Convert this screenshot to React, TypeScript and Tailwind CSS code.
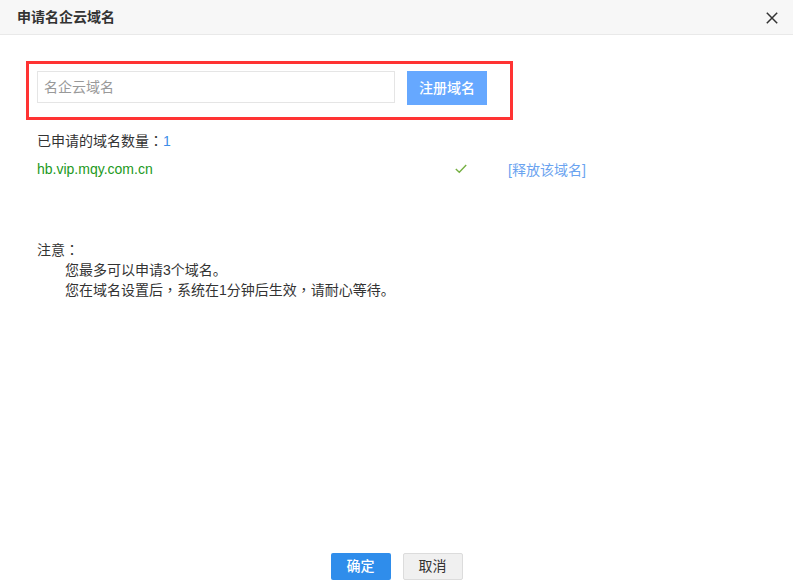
import React from "react";

const font = { fontFamily: '"Liberation Sans", Arial, "Noto Sans CJK SC", sans-serif' };
const punct = { fontFamily: '"Noto Sans CJK TC", "Noto Sans CJK SC", sans-serif' };

function P({ c }: { c: string }) {
  return <span style={punct}>{c}</span>;
}

export default function App() {
  return (
    <div
      className="w-[793px] h-[588px] bg-white flex flex-col text-[14px] text-[#333] overflow-hidden"
      style={font}
    >
      <div className="h-[35px] shrink-0 bg-[#f7f7f7] border-b border-[#e9e9e9] flex items-center justify-between pl-[17px] pr-[15px]">
        <span className="font-bold text-[14px] text-[#333]">申请名企云域名</span>
        <svg width="12" height="12" viewBox="0 0 12 12" className="mt-[1px]">
          <path d="M0.8 0.8 L11.2 11.2 M11.2 0.8 L0.8 11.2" stroke="#333" strokeWidth="1.5" fill="none" />
        </svg>
      </div>

      <div className="flex-1 flex flex-col">
        <div className="ml-[26px] mt-[26px] w-[487px] h-[59px] border-[3px] border-[#ff3333] flex items-start gap-[12px] pl-[8px] pt-[7px]">
          <div className="w-[358px] h-[32px] border border-[#e5e5e5] flex items-center pl-[6px] text-[#999]">
            名企云域名
          </div>
          <div className="w-[80px] h-[34px] bg-[#66a8ff] text-white font-medium flex items-center justify-center">
            注册域名
          </div>
        </div>

        <div className="ml-[37px] mt-[10px] leading-[20px]">
          已申请的域名数量<P c="：" /><span className="text-[#3d8ee8]">1</span>
        </div>

        <div className="ml-[37px] mt-[6px] flex items-center leading-[20px]">
          <span className="w-[418px] text-[#229922]">hb.vip.mqy.com.cn</span>
          <span className="w-[53px] flex">
            <svg width="12" height="10" viewBox="0 0 12 10">
              <path d="M0.8 5 L4.3 8.3 L11.2 1" stroke="#76b043" strokeWidth="1.4" fill="none" />
            </svg>
          </span>
          <span className="text-[#6aa3f0] mt-[3px]">[释放该域名]</span>
        </div>

        <div className="ml-[37px] mt-[60px] leading-[19.5px]">
          <div>注意<P c="：" /></div>
          <div className="pl-[28px]">您最多可以申请3个域名。</div>
          <div className="pl-[28px]">
            您在域名设置后<P c="，" />系统在1分钟后生效<P c="，" />请耐心等待。
          </div>
        </div>
      </div>

      <div className="h-[35px] shrink-0 flex justify-center items-start gap-[12px]">
        <div className="w-[60px] h-[27px] bg-[#2f8deb] rounded-[2px] text-white font-medium flex items-center justify-center">
          确定
        </div>
        <div className="w-[60px] h-[27px] bg-[#f0f0f0] border border-[#dcdcdc] rounded-[2px] text-[#333] flex items-center justify-center">
          取消
        </div>
      </div>
    </div>
  );
}
